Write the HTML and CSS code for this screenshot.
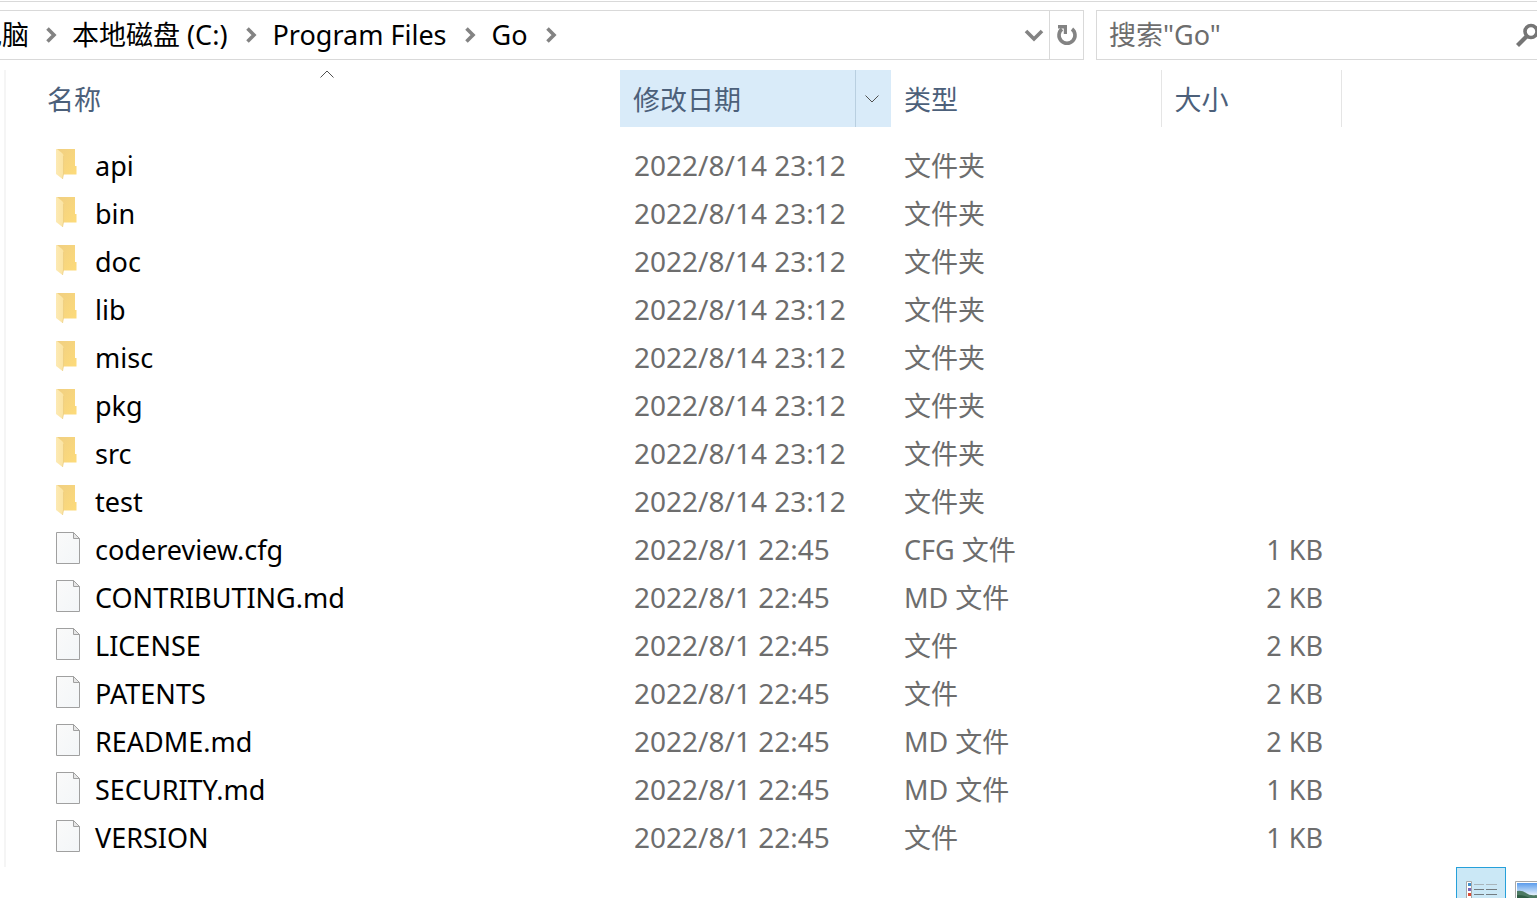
FILE: index.html
```
<!DOCTYPE html>
<html lang="zh-CN">
<head>
    <meta charset="UTF-8">
    <meta name="viewport" content="width=device-width, initial-scale=1.0">
    <title>Go</title>
    <link rel="stylesheet" href="styles.css">
</head>
<body>
    <svg class="sprite" aria-hidden="true">
        <symbol id="chevron" viewBox="0 0 12 16">
            <path d="M2.500 1.500 9 8l-6.500 6.500" fill="none" stroke="#838383" stroke-width="3.600"/>
        </symbol>
        <symbol id="folder" viewBox="0 0 24 32">
            <linearGradient id="folder-back" x1="0" y1="0" x2="1" y2="1">
                <stop offset="0" stop-color="#f0cf82"/>
                <stop offset="1" stop-color="#fddb7a"/>
            </linearGradient>
            <linearGradient id="folder-front" x1="0" y1="0" x2="1" y2="0">
                <stop offset="0" stop-color="#fdeab4"/>
                <stop offset="1" stop-color="#fae3a2"/>
            </linearGradient>
            <path d="M1 1h18v17h1.500v8.500H6L1 24z" fill="url(#folder-back)"/>
            <path d="M0 1h1l5 4q1.500 1 1.500 3v18l-1 5L0 26z" fill="url(#folder-front)"/>
            <path d="M7.500 8v18l-1 5" fill="none" stroke="#eccb7c" stroke-width=".7"/>
        </symbol>
        <symbol id="file" viewBox="0 0 24 32">
            <linearGradient id="file-paper" x1="0" y1="0" x2="1" y2="1">
                <stop offset="0" stop-color="#fafafa"/>
                <stop offset="1" stop-color="#f3f6f8"/>
            </linearGradient>
            <path d="M.5.5h17l6 6v25H.5z" fill="url(#file-paper)" stroke="#a0a0a0"/>
            <path d="M17.500.5v6h6z" fill="#e6e6e6" stroke="#a0a0a0"/>
        </symbol>
    </svg>

    <div class="toolbar">
        <nav class="address-bar" aria-label="地址">
            <ol class="crumbs">
                <li><a href="#">此电脑</a><svg class="chevron"><use href="#chevron"/></svg></li>
                <li><a href="#">本地磁盘 (C:)</a><svg class="chevron"><use href="#chevron"/></svg></li>
                <li><a href="#">Program Files</a><svg class="chevron"><use href="#chevron"/></svg></li>
                <li><a href="#">Go</a><svg class="chevron"><use href="#chevron"/></svg></li>
            </ol>
            <button type="button" class="address-button history" aria-label="以前的位置">
                <svg width="20" height="14" viewBox="0 0 20 14"><path d="m2 3 8 8 8-8" fill="none" stroke="#838383" stroke-width="3.600"/></svg>
            </button>
            <button type="button" class="address-button refresh" aria-label="刷新">
                <svg width="22" height="22" viewBox="0 0 22 22">
                    <path d="M16 5A8 8 0 1 1 6 5" fill="none" stroke="#838383" stroke-width="3.600"/>
                    <path d="M2 1h9v9H7.800V4.500H2z" fill="#838383"/>
                </svg>
            </button>
        </nav>
        <form class="search" role="search">
            <input type="search" class="search-input" placeholder='搜索"Go"' aria-label="搜索">
            <button type="submit" class="search-button" aria-label="搜索">
                <svg width="26" height="24" viewBox="0 0 26 24" fill="none" stroke="#757575">
                    <circle cx="16" cy="8.500" r="6" stroke-width="3.600"/>
                    <path d="M12 13 2.500 22.500" stroke-width="4.200"/>
                </svg>
            </button>
        </form>
    </div>

    <main class="file-list">
        <table>
            <colgroup>
                <col class="col-name">
                <col class="col-date">
                <col class="col-type">
                <col class="col-size">
                <col>
            </colgroup>
            <thead>
                <tr>
                    <th class="name" aria-sort="ascending">
                        <svg class="sort-mark" width="14" height="8" viewBox="0 0 14 8"><path d="m.5 7.500 6.500-6.500 6.500 6.500" fill="none" stroke="#505050"/></svg>
                        <button type="button" class="sort">名称</button>
                    </th>
                    <th class="date">
                        <div class="split">
                            <button type="button" class="sort">修改日期</button>
                            <button type="button" class="filter" aria-label="筛选">
                                <svg width="14" height="8" viewBox="0 0 14 8"><path d="m.5.5 6.500 6.500L13.500.5" fill="none" stroke="#505050"/></svg>
                            </button>
                        </div>
                    </th>
                    <th class="type"><button type="button" class="sort">类型</button></th>
                    <th class="size"><button type="button" class="sort">大小</button></th>
                    <td></td>
                </tr>
            </thead>
            <tbody>
                <tr><td><a href="#" class="entry"><svg><use href="#folder"/></svg>api</a></td><td class="date">2022/8/14 23:12</td><td>文件夹</td><td></td><td></td></tr>
                <tr><td><a href="#" class="entry"><svg><use href="#folder"/></svg>bin</a></td><td class="date">2022/8/14 23:12</td><td>文件夹</td><td></td><td></td></tr>
                <tr><td><a href="#" class="entry"><svg><use href="#folder"/></svg>doc</a></td><td class="date">2022/8/14 23:12</td><td>文件夹</td><td></td><td></td></tr>
                <tr><td><a href="#" class="entry"><svg><use href="#folder"/></svg>lib</a></td><td class="date">2022/8/14 23:12</td><td>文件夹</td><td></td><td></td></tr>
                <tr><td><a href="#" class="entry"><svg><use href="#folder"/></svg>misc</a></td><td class="date">2022/8/14 23:12</td><td>文件夹</td><td></td><td></td></tr>
                <tr><td><a href="#" class="entry"><svg><use href="#folder"/></svg>pkg</a></td><td class="date">2022/8/14 23:12</td><td>文件夹</td><td></td><td></td></tr>
                <tr><td><a href="#" class="entry"><svg><use href="#folder"/></svg>src</a></td><td class="date">2022/8/14 23:12</td><td>文件夹</td><td></td><td></td></tr>
                <tr><td><a href="#" class="entry"><svg><use href="#folder"/></svg>test</a></td><td class="date">2022/8/14 23:12</td><td>文件夹</td><td></td><td></td></tr>
                <tr><td><a href="#" class="entry"><svg><use href="#file"/></svg>codereview.cfg</a></td><td class="date">2022/8/1 22:45</td><td>CFG 文件</td><td class="size">1 KB</td><td></td></tr>
                <tr><td><a href="#" class="entry"><svg><use href="#file"/></svg>CONTRIBUTING.md</a></td><td class="date">2022/8/1 22:45</td><td>MD 文件</td><td class="size">2 KB</td><td></td></tr>
                <tr><td><a href="#" class="entry"><svg><use href="#file"/></svg>LICENSE</a></td><td class="date">2022/8/1 22:45</td><td>文件</td><td class="size">2 KB</td><td></td></tr>
                <tr><td><a href="#" class="entry"><svg><use href="#file"/></svg>PATENTS</a></td><td class="date">2022/8/1 22:45</td><td>文件</td><td class="size">2 KB</td><td></td></tr>
                <tr><td><a href="#" class="entry"><svg><use href="#file"/></svg>README.md</a></td><td class="date">2022/8/1 22:45</td><td>MD 文件</td><td class="size">2 KB</td><td></td></tr>
                <tr><td><a href="#" class="entry"><svg><use href="#file"/></svg>SECURITY.md</a></td><td class="date">2022/8/1 22:45</td><td>MD 文件</td><td class="size">1 KB</td><td></td></tr>
                <tr><td><a href="#" class="entry"><svg><use href="#file"/></svg>VERSION</a></td><td class="date">2022/8/1 22:45</td><td>文件</td><td class="size">1 KB</td><td></td></tr>
            </tbody>
        </table>
    </main>

    <footer class="status-bar">
        <button type="button" class="view active" aria-label="详细信息">
            <svg width="32" height="24" viewBox="0 0 32 24">
                <path d="M.5.5h5v23h-5z" fill="#fff" stroke="#a8a8a8"/>
                <path d="M2 2h3v3H2z" fill="#3f8fca"/>
                <path d="M2 7h3v3H2z" fill="#7a62b8"/>
                <path d="M2 12h3v3H2z" fill="#dc4b35"/>
                <path d="M8 3.500h10m2 0h11" stroke="#a9b5bb"/>
                <path d="M8 8.500h10m2 0h11M8 13.500h10m2 0h11M8 18.500h10m2 0h11" stroke="#737b80"/>
            </svg>
        </button>
        <button type="button" class="view" aria-label="大图标">
            <svg width="32" height="24" viewBox="0 0 32 24">
                <linearGradient id="sky" x1="0" y1="0" x2="0" y2="1">
                    <stop offset="0" stop-color="#5b9cec"/>
                    <stop offset="1" stop-color="#e4f1fb"/>
                </linearGradient>
                <path d="M.5.5h31v23H.5z" fill="#fff" stroke="#a8a8a8"/>
                <path d="M2 2h28v12H2z" fill="url(#sky)"/>
                <path d="M2 10q5-1 9 2t10 2l9 2v6H2z" fill="#4c7a63"/>
                <path d="M2 14q9 0 14 4v4H2z" fill="#2f5d45"/>
            </svg>
        </button>
    </footer>
</body>
</html>
```
FILE: styles.css
```
:root {
    --border: #d9d9d9;
    --column-line: #e5e5e5;
    --text: #000000;
    --muted: #6d6d6d;
    --heading: #4c607a;
    --hover: #d9ebf9;
}

* {
    box-sizing: border-box;
    margin: 0;
    padding: 0;
}

body {
    display: flex;
    flex-direction: column;
    height: 100vh;
    padding-top: 1px;
    overflow: hidden;
    background: #ffffff;
    color: var(--text);
    font-family: "Noto Sans", "Noto Sans CJK SC", sans-serif;
    font-size: 27px;
    line-height: 36px;
}

button,
input {
    border: none;
    background: none;
    color: inherit;
    font: inherit;
}

a {
    color: inherit;
    text-decoration: none;
}

svg {
    display: block;
    flex: none;
}

.sprite {
    position: absolute;
    width: 0;
    height: 0;
}

/* address bar and search */
.toolbar {
    display: flex;
    flex: none;
    gap: 12px;
    padding: 8px 0 10px;
    border-top: 1px solid var(--border);
}

.address-bar {
    display: flex;
    flex: 1;
    height: 50px;
    border: 1px solid var(--border);
    border-left: none;
    overflow: hidden;
}

/* the first crumb runs out past the left edge */
.crumbs {
    display: flex;
    flex: 1;
    align-items: center;
    margin-left: -52px;
    list-style: none;
    white-space: nowrap;
}

.crumbs li {
    display: flex;
    align-items: center;
}

.chevron {
    width: 12px;
    height: 16px;
    margin: 0 15px 0 16px;
}

.crumbs li + li .chevron {
    margin: 0 16px 0 17px;
}

.address-button {
    display: flex;
    align-items: center;
    justify-content: center;
    width: 34px;
}

.history {
    width: 30px;
}

.refresh {
    border-left: 1px solid var(--border);
}

.search {
    display: flex;
    flex: none;
    align-items: center;
    width: 460px;
    height: 50px;
    margin-right: -19px;
    border: 1px solid var(--border);
}

.search-input {
    flex: 1;
    min-width: 0;
    padding-left: 12px;
    outline: none;
}

.search-input::placeholder {
    color: var(--muted);
}

.search-button {
    padding: 0 14px;
}

/* file table */
.file-list {
    flex: none;
    margin-left: 4px;
    padding: 0 0 5px 28px;
    border-left: 2px solid #f5f5f5;
}

table {
    width: 100%;
    table-layout: fixed;
    border-collapse: collapse;
}

.col-name {
    width: 586px;
}

.col-date {
    width: 271px;
}

.col-type {
    width: 270px;
}

.col-size {
    width: 180px;
}

th {
    position: relative;
    height: 57px;
    color: var(--heading);
    font-weight: 400;
    text-align: left;
}

th.date {
    background: var(--hover);
}

th.type,
th.size {
    border-right: 1px solid var(--column-line);
}

.sort {
    width: 100%;
    height: 57px;
    padding: 2px 0 0 13px;
    text-align: left;
}

.sort-mark {
    position: absolute;
    top: 0;
    left: 50%;
    transform: translateX(-50%);
}

.split {
    display: flex;
}

.filter {
    display: flex;
    flex: none;
    align-items: center;
    justify-content: center;
    width: 36px;
    padding-right: 3px;
    border-left: 1px solid #b9cfe0;
}

tbody::before {
    content: "";
    display: block;
    height: 15px;
}

tbody td {
    height: 48px;
    padding-left: 13px;
    color: var(--muted);
    white-space: nowrap;
}

tbody .date {
    padding: 0 0 2px 14px;
    font-size: 28px;
}

tbody .size {
    padding-right: 18px;
    text-align: right;
}

.entry {
    display: flex;
    align-items: center;
    gap: 15px;
    padding-left: 9px;
    color: var(--text);
}

.entry svg {
    width: 24px;
    height: 32px;
    margin-bottom: 4px;
}

/* view switcher */
.status-bar {
    display: flex;
    flex: none;
    justify-content: flex-end;
    margin-right: -19px;
}

.view {
    width: 50px;
    height: 52px;
    padding-left: 9px;
}

.view.active {
    border: 1px solid #26a0da;
    background: #cbe8f6;
}
```
